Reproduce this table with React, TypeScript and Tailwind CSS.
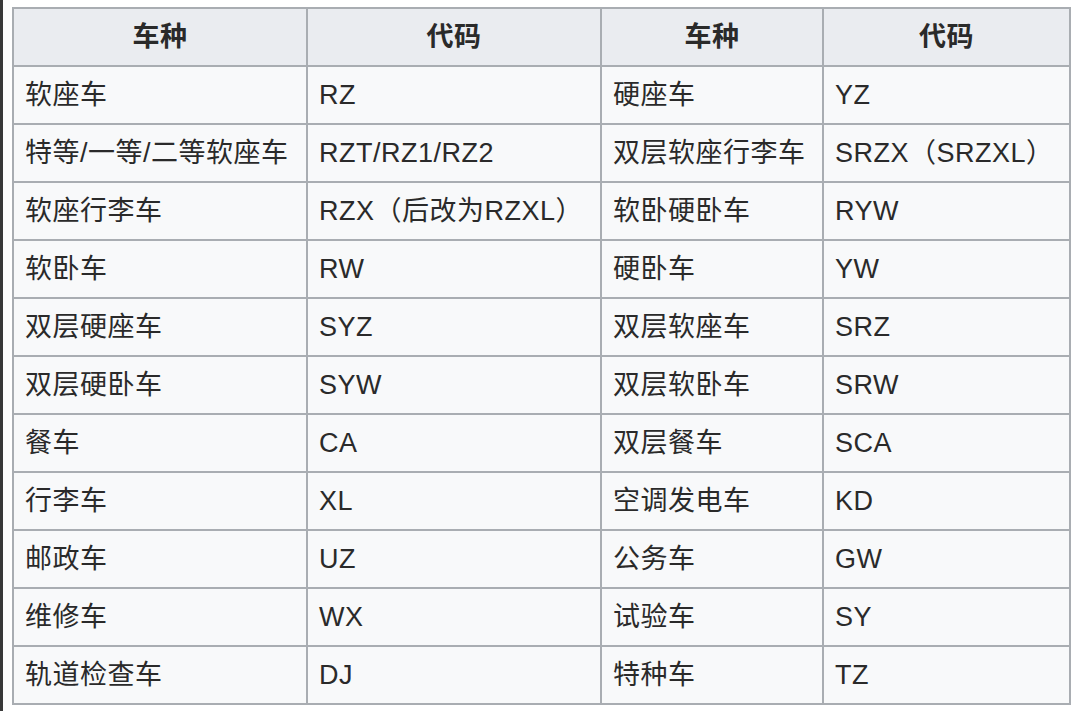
const rows: [string, string, string, string][] = [
  ['软座车', 'RZ', '硬座车', 'YZ'],
  ['特等/一等/二等软座车', 'RZT/RZ1/RZ2', '双层软座行李车', 'SRZX（SRZXL）'],
  ['软座行李车', 'RZX（后改为RZXL）', '软卧硬卧车', 'RYW'],
  ['软卧车', 'RW', '硬卧车', 'YW'],
  ['双层硬座车', 'SYZ', '双层软座车', 'SRZ'],
  ['双层硬卧车', 'SYW', '双层软卧车', 'SRW'],
  ['餐车', 'CA', '双层餐车', 'SCA'],
  ['行李车', 'XL', '空调发电车', 'KD'],
  ['邮政车', 'UZ', '公务车', 'GW'],
  ['维修车', 'WX', '试验车', 'SY'],
  ['轨道检查车', 'DJ', '特种车', 'TZ'],
];

const headers = ['车种', '代码', '车种', '代码'];

export default function App() {
  return (
    <div
      className="w-[1080px] h-[711px] bg-white flex overflow-hidden text-[#2a2a2a]"
      style={{ fontFamily: '"Liberation Sans", "Noto Sans CJK SC", sans-serif' }}
    >
      <div className="w-[3px] h-full bg-[#3a3a3a]" />
      <div className="pl-[9px] pt-[7px]">
        <table className="border-collapse table-fixed w-[1057px] text-[27px] tracking-[0.5px]">
          <colgroup>
            <col className="w-[294px]" />
            <col className="w-[294px]" />
            <col className="w-[222px]" />
            <col className="w-[247px]" />
          </colgroup>
          <thead>
            <tr className="h-[58px] bg-[#eaecf0]">
              {headers.map((h, i) => (
                <th key={i} className="border-2 border-[#a9adb2] font-bold text-center align-middle p-0">
                  {h}
                </th>
              ))}
            </tr>
          </thead>
          <tbody>
            {rows.map((r, i) => (
              <tr key={i} className="h-[58px] bg-[#f8f9fa]">
                {r.map((c, j) => (
                  <td key={j} className="border-2 border-[#a9adb2] px-[11px] py-0 align-middle whitespace-nowrap">
                    {c}
                  </td>
                ))}
              </tr>
            ))}
          </tbody>
        </table>
      </div>
    </div>
  );
}
